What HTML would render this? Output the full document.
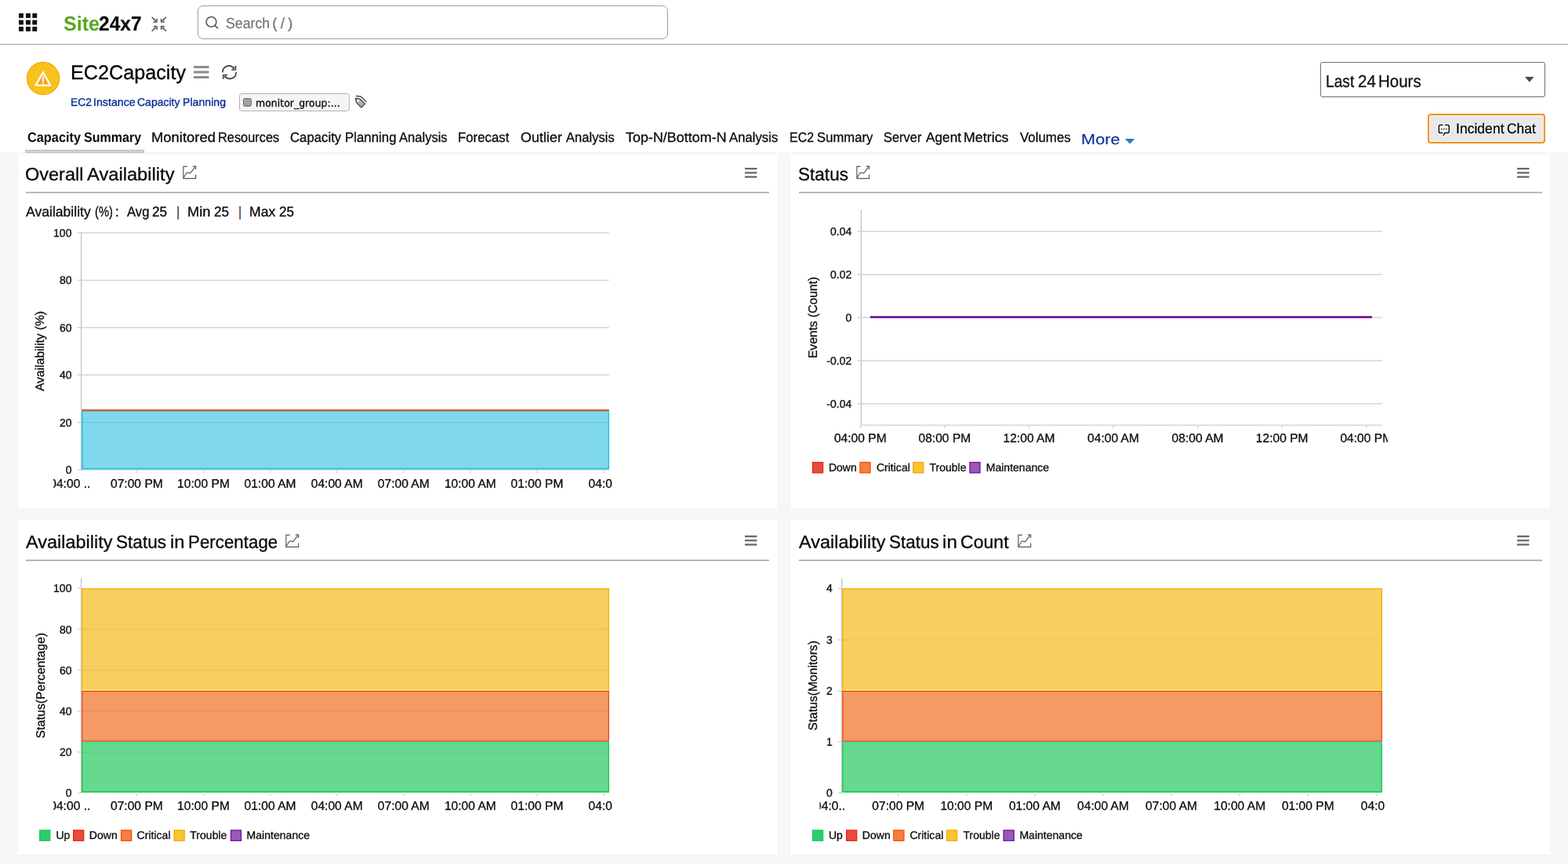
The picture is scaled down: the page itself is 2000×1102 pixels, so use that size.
<!DOCTYPE html><html lang="en"><head><meta charset="utf-8"><title>EC2Capacity - Capacity Summary - Site24x7</title>
<meta name="viewport" content="width=2000"><style>
*{box-sizing:border-box;margin:0;padding:0}
html,body{width:2000px;height:1102px;overflow:hidden}
body{position:relative;background:#f7f7f7;font-family:"Liberation Sans",sans-serif;color:#000}
.t{position:absolute;white-space:nowrap;transform-origin:0 0;display:block;text-decoration:none;font-weight:400;-webkit-text-stroke:0.3px currentColor;text-rendering:geometricPrecision}
.g{font:inherit;font-weight:400;text-decoration:none;border:0;background:none;color:inherit}
.o{position:absolute;width:0;height:0}
.ic,.chart{position:absolute;overflow:visible}
.chart{will-change:transform}
.chart text{font-family:"Liberation Sans",sans-serif;fill:#0a0a0a;stroke:#0a0a0a;stroke-width:0.3px;text-rendering:geometricPrecision}
.topbar{position:absolute;left:0;top:0;width:2000px;height:194px;background:#fff}
.topline{position:absolute;left:0;top:56px;width:2000px;height:1px;background:#9c9c9c}
.searchbox{position:absolute;left:252px;top:7px;width:600px;height:43px;border:1.5px solid #9d9d9d;border-radius:7px;background:#fff}
.tagbox{position:absolute;left:304.5px;top:119px;width:141px;height:23px;border:1.3px solid #b4b4b4;border-radius:3.5px;background:#f5f5f5}
.tagsq{position:absolute;left:310px;top:125px;width:11px;height:11px;border:1.3px solid #6a6a6a;border-radius:2.5px;background:#a0a0a0}
.select{position:absolute;left:1684px;top:78.5px;width:287px;height:45.5px;border:1.5px solid #6f6f6f;border-radius:3px;background:#fff}
.chatbtn{position:absolute;left:1821px;top:144.5px;width:150px;height:38.5px;border:2px solid #ff8f00;border-radius:4px;background:#e8e8e8;box-shadow:inset 0 0 0 1.2px #e0fbf8}
.tabline{position:absolute;left:31.5px;top:190.8px;width:152.6px;height:4px;background:#d2d2d2;border:1px solid #bcbcbc}
.panel{position:absolute;background:#fff;box-shadow:0 0 2px rgba(0,0,0,.06)}
.prule{position:absolute;height:1px;background:#a2a2a2}
</style></head><body>
<div class="topbar">
<header>
<svg class="ic" style="left:20px;top:13px" width="32" height="32" viewBox="0 0 32 32"><rect x="4.0" y="4.0" width="5.9" height="5.9" fill="#0d1117"/><rect x="13.0" y="4.0" width="5.9" height="5.9" fill="#0d1117"/><rect x="21.3" y="4.0" width="5.9" height="5.9" fill="#0d1117"/><rect x="4.0" y="12.6" width="5.9" height="5.9" fill="#0d1117"/><rect x="13.0" y="12.6" width="5.9" height="5.9" fill="#0d1117"/><rect x="21.3" y="12.6" width="5.9" height="5.9" fill="#0d1117"/><rect x="4.0" y="21.1" width="5.9" height="5.9" fill="#0d1117"/><rect x="13.0" y="21.1" width="5.9" height="5.9" fill="#0d1117"/><rect x="21.3" y="21.1" width="5.9" height="5.9" fill="#0d1117"/></svg>
<div class="logo"><span class="g"><span class="t" style="left:80.70px;top:17.00px;font-size:26.00px;line-height:26.00px;color:#55a81f;transform:scaleX(0.9658);font-weight:700;-webkit-text-stroke:0;">Site</span></span><span class="t" style="left:125.83px;top:17.00px;font-size:26.00px;line-height:26.00px;color:#0c0c0c;transform:scaleX(0.9443);font-weight:700;-webkit-text-stroke:0.2px #0c0c0c;">24x7</span></div>
<svg class="ic" style="left:190px;top:18px" width="26" height="26" viewBox="0 0 26 26"><path d="M4.10 4.30L8.80 8.80" stroke="#454545" stroke-width="1.45" stroke-linecap="round" fill="none"/><path d="M5.90 10.30H10.30V5.90Z" fill="#9a9ea0" stroke="#454545" stroke-width="0.9" stroke-linejoin="round"/><path d="M4.10 21.30L8.80 16.80" stroke="#454545" stroke-width="1.45" stroke-linecap="round" fill="none"/><path d="M5.90 15.30H10.30V19.70Z" fill="#9a9ea0" stroke="#454545" stroke-width="0.9" stroke-linejoin="round"/><path d="M21.50 4.30L16.80 8.80" stroke="#454545" stroke-width="1.45" stroke-linecap="round" fill="none"/><path d="M19.70 10.30H15.30V5.90Z" fill="#9a9ea0" stroke="#454545" stroke-width="0.9" stroke-linejoin="round"/><path d="M21.50 21.30L16.80 16.80" stroke="#454545" stroke-width="1.45" stroke-linecap="round" fill="none"/><path d="M19.70 15.30H15.30V19.70Z" fill="#9a9ea0" stroke="#454545" stroke-width="0.9" stroke-linejoin="round"/></svg>
<div class="searchbox"></div><svg class="ic" style="left:261px;top:20px" width="19" height="18" viewBox="0 0 19 18"><circle cx="8.5" cy="7.9" r="6.4" fill="none" stroke="#5a5a5a" stroke-width="1.6"/><path d="M13.2 12.6L16.6 15.8" stroke="#5a5a5a" stroke-width="1.7" stroke-linecap="round"/></svg><label class="g"><span class="t" style="left:287.72px;top:20.98px;font-size:19.03px;line-height:19.03px;color:#707070;transform:scaleX(0.9327);-webkit-text-stroke:0.15px #707070;">Search</span> <span class="t" style="left:347.23px;top:20.98px;font-size:19.03px;line-height:19.03px;color:#707070;transform:scaleX(1.0000);-webkit-text-stroke:0.15px #707070;">(</span> <span class="t" style="left:357.76px;top:20.98px;font-size:19.03px;line-height:19.03px;color:#707070;transform:scaleX(1.0000);-webkit-text-stroke:0.15px #707070;">/</span> <span class="t" style="left:367.04px;top:20.98px;font-size:19.03px;line-height:19.03px;color:#707070;transform:scaleX(1.0000);-webkit-text-stroke:0.15px #707070;">)</span></label>
<div class="topline"></div>
</header>
<div class="monitor-head">
<svg class="ic" style="left:33.3px;top:78px" width="44" height="44" viewBox="0 0 44 44"><circle cx="22" cy="22" r="20.6" fill="#f7c21b" stroke="#f5a20c" stroke-width="1.2"/><path d="M21.9 14.1L31.0 30.9H12.8Z" fill="#f6a40e" stroke="#fff" stroke-width="2.4" stroke-linejoin="round"/><path d="M21.9 19.8V26.2" stroke="#fff" stroke-width="1.8" stroke-linecap="round"/><circle cx="21.9" cy="28.7" r="1.1" fill="#fff"/></svg>
<h1 class="g"><span class="t" style="left:89.82px;top:81.27px;font-size:25.46px;line-height:25.46px;color:#000;transform:scaleX(0.9900);">EC2Capacity</span></h1>
<svg class="ic" style="left:246.5px;top:84.1px" width="19.6" height="16.4" viewBox="0 0 19.6 16.4"><rect x="0" y="0.00" width="19.60" height="2.90" rx="0.6" fill="#8b8b8b"/><rect x="0" y="6.50" width="19.60" height="2.90" rx="0.6" fill="#8b8b8b"/><rect x="0" y="13.00" width="19.60" height="2.90" rx="0.6" fill="#8b8b8b"/></svg>
<svg class="ic" style="left:281px;top:81px" width="24" height="23" viewBox="0 0 24 23"><g fill="none" stroke="#3f3f3f" stroke-width="1.7" stroke-linecap="round"><path d="M3.0 10.6A8 8 0 0 1 17.3 6.1"/><path d="M20.2 11.6A8 8 0 0 1 5.9 16.3"/></g><path d="M19.9 2.9V8.3H14.5Z" fill="#8d9194" stroke="#3f3f3f" stroke-width="1" stroke-linejoin="round"/><path d="M3.4 19.7V14.2H8.9Z" fill="#8d9194" stroke="#3f3f3f" stroke-width="1" stroke-linejoin="round"/></svg>
<a class="g"><span class="t" style="left:89.61px;top:123.00px;font-size:14.00px;line-height:14.00px;color:#002a93;transform:scaleX(0.9913);-webkit-text-stroke:0.3px #002a93;">EC2</span> <span class="t" style="left:118.82px;top:123.00px;font-size:14.00px;line-height:14.00px;color:#002a93;transform:scaleX(1.0153);-webkit-text-stroke:0.3px #002a93;">Instance</span> <span class="t" style="left:175.07px;top:123.00px;font-size:14.00px;line-height:14.00px;color:#002a93;transform:scaleX(0.9990);-webkit-text-stroke:0.3px #002a93;">Capacity</span> <span class="t" style="left:232.94px;top:123.00px;font-size:14.00px;line-height:14.00px;color:#002a93;transform:scaleX(1.0097);-webkit-text-stroke:0.3px #002a93;">Planning</span></a>
<div class="tagbox"></div><div class="tagsq"></div><span class="g"><span class="t" style="left:325.65px;top:125.90px;font-size:13.20px;line-height:13.20px;color:#0a0a0a;transform:scaleX(0.9483);font-family:'DejaVu Sans', 'Liberation Sans', sans-serif;">monitor_group:...</span></span>
<svg class="ic" style="left:452px;top:121px" width="18" height="18" viewBox="0 0 18 18"><path d="M1.4 4.4L7.2 5.2L13.6 11.4L8.9 16.0L2.6 9.9Z" fill="#aeb2b3" stroke="#3a3a3a" stroke-width="1.2" stroke-linejoin="round"/><circle cx="4.7" cy="7.2" r="1.5" fill="#fff"/><path d="M2.6 1.5L8.4 2.2L15.3 8.9" fill="none" stroke="#3a3a3a" stroke-width="1.3" stroke-linecap="round" stroke-linejoin="round"/></svg>
<div class="select"></div><span class="g"><span class="t" style="left:1691.19px;top:92.64px;font-size:21.71px;line-height:21.71px;color:#111;transform:scaleX(0.8839);">Last</span> <span class="t" style="left:1731.55px;top:92.64px;font-size:21.71px;line-height:21.71px;color:#111;transform:scaleX(0.9496);">24</span> <span class="t" style="left:1758.47px;top:92.64px;font-size:21.71px;line-height:21.71px;color:#111;transform:scaleX(0.9443);">Hours</span></span><svg class="ic" style="left:1945px;top:98.2px" width="11.6" height="6.8" viewBox="0 0 11.6 6.8"><path d="M0 0H11.6 L5.8 6.8Z" fill="#4a4a4a"/></svg>
<div class="chatbtn"></div><svg class="ic" style="left:1834px;top:158px" width="17" height="17" viewBox="0 0 17 17"><defs><filter id="halo" x="-30%" y="-30%" width="160%" height="160%"><feMorphology in="SourceAlpha" operator="dilate" radius="1.2" result="d"/><feGaussianBlur in="d" stdDeviation="0.6" result="b"/><feFlood flood-color="#fff"/><feComposite in2="b" operator="in" result="h"/><feMerge><feMergeNode in="h"/><feMergeNode in="SourceGraphic"/></feMerge></filter></defs><g filter="url(#halo)"><path d="M6.0 1.4H2.9Q1.3 1.4 1.3 3.0V9.9Q1.3 11.5 2.9 11.5H5.6M9.4 1.4H12.6Q14.2 1.4 14.2 3.0V9.9Q14.2 11.5 12.6 11.5H9.4Q8.3 11.6 7.9 13.0L7.3 14.4" fill="none" stroke="#000" stroke-width="1.8" stroke-linecap="round" stroke-linejoin="round"/><rect x="4.0" y="6.0" width="1.9" height="1.4" fill="#000"/><rect x="7.0" y="6.0" width="1.9" height="1.4" fill="#000"/><rect x="10.0" y="6.0" width="1.9" height="1.4" fill="#000"/></g></svg><button class="g"><span class="t" style="left:1857.14px;top:154.97px;font-size:18.05px;line-height:18.05px;color:#000;transform:scaleX(0.9747);text-shadow:0 0 2px #fff,0 0 2px #fff,0 0 3px #fff;">Incident</span> <span class="t" style="left:1921.91px;top:154.97px;font-size:18.05px;line-height:18.05px;color:#000;transform:scaleX(0.9640);text-shadow:0 0 2px #fff,0 0 2px #fff,0 0 3px #fff;">Chat</span></button>
</div>
<nav>
<a class="g"><span class="t" style="left:34.98px;top:167.26px;font-size:17.48px;line-height:17.48px;color:#0b0b0b;transform:scaleX(0.9343);font-weight:700;-webkit-text-stroke:0;">Capacity</span> <span class="t" style="left:107.07px;top:167.26px;font-size:17.48px;line-height:17.48px;color:#0b0b0b;transform:scaleX(0.9184);font-weight:700;-webkit-text-stroke:0;">Summary</span></a>
<a class="g"><span class="t" style="left:193.42px;top:167.26px;font-size:17.48px;line-height:17.48px;color:#0b0b0b;transform:scaleX(1.0540);">Monitored</span> <span class="t" style="left:277.91px;top:167.26px;font-size:17.48px;line-height:17.48px;color:#0b0b0b;transform:scaleX(0.9359);">Resources</span></a>
<a class="g"><span class="t" style="left:370.21px;top:167.26px;font-size:17.48px;line-height:17.48px;color:#0b0b0b;transform:scaleX(0.9602);">Capacity</span> <span class="t" style="left:440.13px;top:167.26px;font-size:17.48px;line-height:17.48px;color:#0b0b0b;transform:scaleX(0.9650);">Planning</span> <span class="t" style="left:508.96px;top:167.26px;font-size:17.48px;line-height:17.48px;color:#0b0b0b;transform:scaleX(0.9478);">Analysis</span></a>
<a class="g"><span class="t" style="left:583.79px;top:167.26px;font-size:17.48px;line-height:17.48px;color:#0b0b0b;transform:scaleX(0.9620);">Forecast</span></a>
<a class="g"><span class="t" style="left:663.57px;top:167.26px;font-size:17.48px;line-height:17.48px;color:#0b0b0b;transform:scaleX(1.0310);">Outlier</span> <span class="t" style="left:722.13px;top:167.26px;font-size:17.48px;line-height:17.48px;color:#0b0b0b;transform:scaleX(0.9493);">Analysis</span></a>
<a class="g"><span class="t" style="left:798.12px;top:167.26px;font-size:17.48px;line-height:17.48px;color:#0b0b0b;transform:scaleX(1.0274);">Top-N/Bottom-N</span> <span class="t" style="left:929.82px;top:167.26px;font-size:17.48px;line-height:17.48px;color:#0b0b0b;transform:scaleX(0.9577);">Analysis</span></a>
<a class="g"><span class="t" style="left:1006.77px;top:167.26px;font-size:17.48px;line-height:17.48px;color:#0b0b0b;transform:scaleX(0.9146);">EC2</span> <span class="t" style="left:1041.97px;top:167.26px;font-size:17.48px;line-height:17.48px;color:#0b0b0b;transform:scaleX(0.9552);">Summary</span></a>
<a class="g"><span class="t" style="left:1127.23px;top:167.26px;font-size:17.48px;line-height:17.48px;color:#0b0b0b;transform:scaleX(0.9409);">Server</span> <span class="t" style="left:1180.84px;top:167.26px;font-size:17.48px;line-height:17.48px;color:#0b0b0b;transform:scaleX(0.9871);">Agent</span> <span class="t" style="left:1228.65px;top:167.26px;font-size:17.48px;line-height:17.48px;color:#0b0b0b;transform:scaleX(1.0212);">Metrics</span></a>
<a class="g"><span class="t" style="left:1300.52px;top:167.26px;font-size:17.48px;line-height:17.48px;color:#0b0b0b;transform:scaleX(0.9666);">Volumes</span></a>
<a class="g"><span class="t" style="left:1378.62px;top:169.12px;font-size:18.75px;line-height:18.75px;color:#002f98;transform:scaleX(1.1623);-webkit-text-stroke:0.1px #002f98;">More</span></a><svg class="ic" style="left:1434.8px;top:177px" width="12.4" height="6.4" viewBox="0 0 12.4 6.4"><path d="M0 0H12.4 L6.2 6.4Z" fill="#2f72cf"/></svg>
<div class="tabline"></div>
</nav>
</div>
<main>
<section class="panel" style="left:23px;top:197px;width:969px;height:452px"><div class="o" style="left:-23px;top:-197px">
<h2 class="g"><span class="t" style="left:32.43px;top:210.51px;font-size:22.98px;line-height:22.98px;color:#0a0a0a;transform:scaleX(1.0237);">Overall</span> <span class="t" style="left:110.77px;top:210.51px;font-size:22.98px;line-height:22.98px;color:#0a0a0a;transform:scaleX(1.0317);">Availability</span></h2><svg class="ic" style="left:233px;top:211.4px" width="18" height="18" viewBox="0 0 18 18"><g fill="none" stroke="#55595a" stroke-width="1.2" stroke-linecap="round" stroke-linejoin="round"><path d="M5.4 1.3H0.9V16.7H16.7V12.2"/><path d="M1.3 15.5L5.4 9.0L9.7 9.8L16.0 1.9"/><path d="M13.2 1.0L16.6 1.2L16.7 4.6" fill="#8c9092"/></g></svg><svg class="ic" style="left:949.6px;top:214px" width="15.6" height="13.2" viewBox="0 0 15.6 13.2"><rect x="0" y="0.00" width="15.60" height="2.20" rx="0.6" fill="#666"/><rect x="0" y="5.25" width="15.60" height="2.20" rx="0.6" fill="#666"/><rect x="0" y="10.50" width="15.60" height="2.20" rx="0.6" fill="#666"/></svg>
<div class="prule" style="left:33px;top:245px;width:948px;box-shadow:0 1px 0 #e4e4e4,0 -1px 0 #e6e6e6"></div>
<p class="g"><span class="t" style="left:32.82px;top:261.01px;font-size:17.98px;line-height:17.98px;color:#0b0b0b;transform:scaleX(0.9782);">Availability</span> <span class="t" style="left:120.84px;top:261.01px;font-size:17.98px;line-height:17.98px;color:#0b0b0b;transform:scaleX(0.8185);">(%)</span> <span class="t" style="left:146.84px;top:261.01px;font-size:17.98px;line-height:17.98px;color:#0b0b0b;transform:scaleX(1.0000);">:</span> <span class="t" style="left:162.30px;top:261.01px;font-size:17.98px;line-height:17.98px;color:#0b0b0b;transform:scaleX(0.9277);">Avg</span> <span class="t" style="left:194.14px;top:261.01px;font-size:17.98px;line-height:17.98px;color:#0b0b0b;transform:scaleX(0.9563);">25</span> <span class="t" style="left:224.70px;top:261.01px;font-size:17.98px;line-height:17.98px;color:#0b0b0b;transform:scaleX(1.0000);-webkit-text-stroke:0;color:#3a3a3a;">|</span> <span class="t" style="left:239.23px;top:261.01px;font-size:17.98px;line-height:17.98px;color:#0b0b0b;transform:scaleX(1.0173);">Min</span> <span class="t" style="left:272.65px;top:261.01px;font-size:17.98px;line-height:17.98px;color:#0b0b0b;transform:scaleX(0.9563);">25</span> <span class="t" style="left:303.70px;top:261.01px;font-size:17.98px;line-height:17.98px;color:#0b0b0b;transform:scaleX(1.0000);-webkit-text-stroke:0;color:#3a3a3a;">|</span> <span class="t" style="left:318.45px;top:261.01px;font-size:17.98px;line-height:17.98px;color:#0b0b0b;transform:scaleX(0.9775);">Max</span> <span class="t" style="left:355.63px;top:261.01px;font-size:17.98px;line-height:17.98px;color:#0b0b0b;transform:scaleX(0.9563);">25</span></p>
<svg class="chart" style="left:23px;top:250px" width="969" height="399" viewBox="23 250 969 399"><defs><clipPath id="c1"><rect x="68" y="600" width="712.8" height="40"/></clipPath></defs><line x1="98.5" x2="776.8" y1="296.9" y2="296.9" stroke="#d6d6d6" stroke-width="1.5" opacity="1"/><line x1="98.5" x2="776.8" y1="357.4" y2="357.4" stroke="#d6d6d6" stroke-width="1.5" opacity="1"/><line x1="98.5" x2="776.8" y1="417.8" y2="417.8" stroke="#d6d6d6" stroke-width="1.5" opacity="1"/><line x1="98.5" x2="776.8" y1="478.3" y2="478.3" stroke="#d6d6d6" stroke-width="1.5" opacity="1"/><line x1="98.5" x2="776.8" y1="538.7" y2="538.7" stroke="#d6d6d6" stroke-width="1.5" opacity="1"/><line x1="98.5" x2="776.8" y1="599.2" y2="599.2" stroke="#d6d6d6" stroke-width="1.5" opacity="1"/><line x1="103.6" x2="103.6" y1="296.2" y2="599.9" stroke="#c9c9c9" stroke-width="1.5"/><rect x="104.30" y="523.40" width="672.60" height="75.20" fill="#7fd8ec"/><line x1="104.3" x2="776.8" y1="538.8" y2="538.8" stroke="#6fcbe0" stroke-width="1.5" opacity="1"/><path d="M104.9 524.5V597.7H776.3V524.5" fill="none" stroke="#1fc0e8" stroke-width="1.5"/><line x1="104.3" x2="776.9" y1="525.0" y2="525.0" stroke="#3fe6fb" stroke-width="1.6" opacity="1"/><line x1="104.3" x2="776.9" y1="523.3" y2="523.3" stroke="#e8410d" stroke-width="2" opacity="1"/><line x1="174.4" x2="174.4" y1="600.4" y2="603.2" stroke="#cfcfcf" stroke-width="1.4"/><line x1="259.5" x2="259.5" y1="600.4" y2="603.2" stroke="#cfcfcf" stroke-width="1.4"/><line x1="344.6" x2="344.6" y1="600.4" y2="603.2" stroke="#cfcfcf" stroke-width="1.4"/><line x1="429.7" x2="429.7" y1="600.4" y2="603.2" stroke="#cfcfcf" stroke-width="1.4"/><line x1="514.8" x2="514.8" y1="600.4" y2="603.2" stroke="#cfcfcf" stroke-width="1.4"/><line x1="599.9" x2="599.9" y1="600.4" y2="603.2" stroke="#cfcfcf" stroke-width="1.4"/><line x1="685.0" x2="685.0" y1="600.4" y2="603.2" stroke="#cfcfcf" stroke-width="1.4"/><line x1="770.1" x2="770.1" y1="600.4" y2="603.2" stroke="#cfcfcf" stroke-width="1.4"/><g class="yl" font-size="14.06" text-anchor="end"><text x="91.5" y="301.8">100</text><text x="91.5" y="362.3">80</text><text x="91.5" y="422.7">60</text><text x="91.5" y="483.2">40</text><text x="91.5" y="543.6">20</text><text x="91.5" y="604.1">0</text></g><g class="xl" font-size="15.625" text-anchor="middle" clip-path="url(#c1)"><text x="89.3" y="621.6">04:00 ..</text><text x="174.4" y="621.6">07:00 PM</text><text x="259.5" y="621.6">10:00 PM</text><text x="344.6" y="621.6">01:00 AM</text><text x="429.7" y="621.6">04:00 AM</text><text x="514.8" y="621.6">07:00 AM</text><text x="599.9" y="621.6">10:00 AM</text><text x="685.0" y="621.6">01:00 PM</text><text x="770.1" y="621.6">04:0..</text></g><text class="yt" font-size="15.625" text-anchor="middle" transform="translate(56.2 447.8) rotate(-90)">Availability (%)</text></svg>
</div></section>
<section class="panel" style="left:1008px;top:197px;width:969px;height:452px"><div class="o" style="left:-1008px;top:-197px">
<h2 class="g"><span class="t" style="left:1017.78px;top:210.51px;font-size:22.98px;line-height:22.98px;color:#0a0a0a;transform:scaleX(0.9821);">Status</span></h2><svg class="ic" style="left:1092.3px;top:211.4px" width="18" height="18" viewBox="0 0 18 18"><g fill="none" stroke="#55595a" stroke-width="1.2" stroke-linecap="round" stroke-linejoin="round"><path d="M5.4 1.3H0.9V16.7H16.7V12.2"/><path d="M1.3 15.5L5.4 9.0L9.7 9.8L16.0 1.9"/><path d="M13.2 1.0L16.6 1.2L16.7 4.6" fill="#8c9092"/></g></svg><svg class="ic" style="left:1935.2px;top:214px" width="15.6" height="13.2" viewBox="0 0 15.6 13.2"><rect x="0" y="0.00" width="15.60" height="2.20" rx="0.6" fill="#666"/><rect x="0" y="5.25" width="15.60" height="2.20" rx="0.6" fill="#666"/><rect x="0" y="10.50" width="15.60" height="2.20" rx="0.6" fill="#666"/></svg>
<div class="prule" style="left:1019px;top:245px;width:948px;box-shadow:0 1px 0 #e4e4e4,0 -1px 0 #e6e6e6"></div>
<svg class="chart" style="left:1008px;top:250px" width="969" height="399" viewBox="1008 250 969 399"><defs><clipPath id="c2"><rect x="1040" y="545" width="730.2" height="40"/></clipPath></defs><line x1="1093.5" x2="1763.1" y1="295.3" y2="295.3" stroke="#d6d6d6" stroke-width="1.5" opacity="1"/><line x1="1093.5" x2="1763.1" y1="350.2" y2="350.2" stroke="#d6d6d6" stroke-width="1.5" opacity="1"/><line x1="1093.5" x2="1763.1" y1="405.1" y2="405.1" stroke="#d6d6d6" stroke-width="1.5" opacity="1"/><line x1="1093.5" x2="1763.1" y1="460.0" y2="460.0" stroke="#d6d6d6" stroke-width="1.5" opacity="1"/><line x1="1093.5" x2="1763.1" y1="514.9" y2="514.9" stroke="#d6d6d6" stroke-width="1.5" opacity="1"/><line x1="1098.5" x2="1098.5" y1="267.6" y2="543" stroke="#c9c9c9" stroke-width="1.5"/><line x1="1098.5" x2="1763.1" y1="542.3" y2="542.3" stroke="#dadada" stroke-width="1.7" opacity="1"/><line x1="1097.3" x2="1097.3" y1="543.0" y2="546.3" stroke="#cfcfcf" stroke-width="1.4"/><line x1="1204.9" x2="1204.9" y1="543.0" y2="546.3" stroke="#cfcfcf" stroke-width="1.4"/><line x1="1312.5" x2="1312.5" y1="543.0" y2="546.3" stroke="#cfcfcf" stroke-width="1.4"/><line x1="1420.0" x2="1420.0" y1="543.0" y2="546.3" stroke="#cfcfcf" stroke-width="1.4"/><line x1="1527.6" x2="1527.6" y1="543.0" y2="546.3" stroke="#cfcfcf" stroke-width="1.4"/><line x1="1635.2" x2="1635.2" y1="543.0" y2="546.3" stroke="#cfcfcf" stroke-width="1.4"/><line x1="1742.8" x2="1742.8" y1="543.0" y2="546.3" stroke="#cfcfcf" stroke-width="1.4"/><line x1="1110.0" x2="1750.1" y1="403.7" y2="403.7" stroke="#d42a2a" stroke-width="1.4" opacity="1"/><line x1="1110.0" x2="1750.1" y1="404.7" y2="404.7" stroke="#5a12c8" stroke-width="1.9" opacity="1"/><g class="yl" font-size="14.06" text-anchor="end"><text x="1086.3" y="300.2">0.04</text><text x="1086.3" y="355.1">0.02</text><text x="1086.3" y="410.0">0</text><text x="1086.3" y="464.9">-0.02</text><text x="1086.3" y="519.8">-0.04</text></g><g class="xl" font-size="15.625" text-anchor="middle" clip-path="url(#c2)"><text x="1097.3" y="564.0">04:00 PM</text><text x="1204.9" y="564.0">08:00 PM</text><text x="1312.5" y="564.0">12:00 AM</text><text x="1420.0" y="564.0">04:00 AM</text><text x="1527.6" y="564.0">08:00 AM</text><text x="1635.2" y="564.0">12:00 PM</text><text x="1742.8" y="564.0">04:00 PM</text></g><text class="yt" font-size="15.625" text-anchor="middle" transform="translate(1042.4 405.0) rotate(-90)">Events (Count)</text><g class="lg" font-size="14.06"><rect x="1036.6" y="589.8" width="13" height="13.2" fill="#e74c3c" stroke="#ea2a1c" stroke-width="1.4"/><text x="1056.9" y="600.8">Down</text><rect x="1097.0" y="589.8" width="13" height="13.2" fill="#f5813a" stroke="#f4500e" stroke-width="1.4"/><text x="1117.9" y="600.8">Critical</text><rect x="1164.8" y="589.8" width="13" height="13.2" fill="#f7c62a" stroke="#f6a912" stroke-width="1.4"/><text x="1185.4" y="600.8">Trouble</text><rect x="1237.0" y="589.8" width="13" height="13.2" fill="#9b59b6" stroke="#6c1aa6" stroke-width="1.4"/><text x="1257.7" y="600.8">Maintenance</text></g></svg>
</div></section>
<section class="panel" style="left:23px;top:663px;width:969px;height:427px"><div class="o" style="left:-23px;top:-663px">
<h2 class="g"><span class="t" style="left:33.04px;top:679.51px;font-size:22.98px;line-height:22.98px;color:#0a0a0a;transform:scaleX(1.0218);">Availability</span> <span class="t" style="left:147.98px;top:679.51px;font-size:22.98px;line-height:22.98px;color:#0a0a0a;transform:scaleX(0.9837);">Status</span> <span class="t" style="left:217.04px;top:679.51px;font-size:22.98px;line-height:22.98px;color:#0a0a0a;transform:scaleX(1.0376);">in</span> <span class="t" style="left:240.43px;top:679.51px;font-size:22.98px;line-height:22.98px;color:#0a0a0a;transform:scaleX(0.9725);">Percentage</span></h2><svg class="ic" style="left:364px;top:681px" width="18" height="18" viewBox="0 0 18 18"><g fill="none" stroke="#55595a" stroke-width="1.2" stroke-linecap="round" stroke-linejoin="round"><path d="M5.4 1.3H0.9V16.7H16.7V12.2"/><path d="M1.3 15.5L5.4 9.0L9.7 9.8L16.0 1.9"/><path d="M13.2 1.0L16.6 1.2L16.7 4.6" fill="#8c9092"/></g></svg><svg class="ic" style="left:949.6px;top:683px" width="15.6" height="13.2" viewBox="0 0 15.6 13.2"><rect x="0" y="0.00" width="15.60" height="2.20" rx="0.6" fill="#666"/><rect x="0" y="5.25" width="15.60" height="2.20" rx="0.6" fill="#666"/><rect x="0" y="10.50" width="15.60" height="2.20" rx="0.6" fill="#666"/></svg>
<div class="prule" style="left:33px;top:714px;width:948px;box-shadow:0 1px 0 #d2d2d2,0 -1px 0 #f2f2f2"></div>
<svg class="chart" style="left:23px;top:716px" width="969" height="374" viewBox="23 716 969 374"><defs><clipPath id="c3"><rect x="68.0" y="1013" width="712.8" height="40"/></clipPath></defs><line x1="98.6" x2="103.6" y1="750.4" y2="750.4" stroke="#d6d6d6" stroke-width="1.5" opacity="1"/><line x1="98.6" x2="103.6" y1="802.6" y2="802.6" stroke="#d6d6d6" stroke-width="1.5" opacity="1"/><line x1="98.6" x2="103.6" y1="854.8" y2="854.8" stroke="#d6d6d6" stroke-width="1.5" opacity="1"/><line x1="98.6" x2="103.6" y1="907.1" y2="907.1" stroke="#d6d6d6" stroke-width="1.5" opacity="1"/><line x1="98.6" x2="103.6" y1="959.3" y2="959.3" stroke="#d6d6d6" stroke-width="1.5" opacity="1"/><line x1="98.6" x2="103.6" y1="1011.5" y2="1011.5" stroke="#d6d6d6" stroke-width="1.5" opacity="1"/><line x1="103.6" x2="103.6" y1="737.2" y2="1012" stroke="#c9c9c9" stroke-width="1.5"/><rect x="104.40" y="750.40" width="672.50" height="130.55" fill="#f8cf5f"/><rect x="104.40" y="880.95" width="672.50" height="65.27" fill="#f59a64"/><rect x="104.40" y="946.23" width="672.50" height="64.48" fill="#66d98f"/><line x1="104.4" x2="776.9" y1="802.6" y2="802.6" stroke="#000" stroke-width="1.5" opacity="0.045"/><line x1="104.4" x2="776.9" y1="854.8" y2="854.8" stroke="#000" stroke-width="1.5" opacity="0.045"/><line x1="104.4" x2="776.9" y1="907.1" y2="907.1" stroke="#000" stroke-width="1.5" opacity="0.045"/><line x1="104.4" x2="776.9" y1="959.3" y2="959.3" stroke="#000" stroke-width="1.5" opacity="0.045"/><path d="M104.8 881.0V751.0H776.4V881.0" fill="none" stroke="#f4ae00" stroke-width="1.25"/><line x1="104.4" x2="776.9" y1="880.1" y2="880.1" stroke="#fdf06a" stroke-width="1.4" opacity="1"/><path d="M104.8 946.2V881.6H776.4V946.2" fill="none" stroke="#f4431a" stroke-width="1.25"/><line x1="104.4" x2="776.9" y1="945.3" y2="945.3" stroke="#f5552a" stroke-width="1.4" opacity="1"/><path d="M104.8 946.2V1010.0H776.4V946.2" fill="none" stroke="#14c548" stroke-width="1.3"/><line x1="104.4" x2="776.9" y1="946.9" y2="946.9" stroke="#24e79a" stroke-width="1.5" opacity="1"/><line x1="174.4" x2="174.4" y1="1012.6" y2="1015.4" stroke="#cfcfcf" stroke-width="1.4"/><line x1="259.5" x2="259.5" y1="1012.6" y2="1015.4" stroke="#cfcfcf" stroke-width="1.4"/><line x1="344.6" x2="344.6" y1="1012.6" y2="1015.4" stroke="#cfcfcf" stroke-width="1.4"/><line x1="429.7" x2="429.7" y1="1012.6" y2="1015.4" stroke="#cfcfcf" stroke-width="1.4"/><line x1="514.8" x2="514.8" y1="1012.6" y2="1015.4" stroke="#cfcfcf" stroke-width="1.4"/><line x1="599.9" x2="599.9" y1="1012.6" y2="1015.4" stroke="#cfcfcf" stroke-width="1.4"/><line x1="685.0" x2="685.0" y1="1012.6" y2="1015.4" stroke="#cfcfcf" stroke-width="1.4"/><line x1="770.1" x2="770.1" y1="1012.6" y2="1015.4" stroke="#cfcfcf" stroke-width="1.4"/><g class="yl" font-size="14.06" text-anchor="end"><text x="91.5" y="755.3">100</text><text x="91.5" y="807.5">80</text><text x="91.5" y="859.7">60</text><text x="91.5" y="912.0">40</text><text x="91.5" y="964.2">20</text><text x="91.5" y="1016.4">0</text></g><g class="xl" font-size="15.625" text-anchor="middle" clip-path="url(#c3)"><text x="89.3" y="1033.3">04:00 ..</text><text x="174.4" y="1033.3">07:00 PM</text><text x="259.5" y="1033.3">10:00 PM</text><text x="344.6" y="1033.3">01:00 AM</text><text x="429.7" y="1033.3">04:00 AM</text><text x="514.8" y="1033.3">07:00 AM</text><text x="599.9" y="1033.3">10:00 AM</text><text x="685.0" y="1033.3">01:00 PM</text><text x="770.1" y="1033.3">04:0..</text></g><text class="yt" font-size="15.625" text-anchor="middle" transform="translate(56.5 874.4) rotate(-90)">Status(Percentage)</text><g class="lg" font-size="14.06"><rect x="50.7" y="1059.0" width="13" height="13.2" fill="#2ecc71" stroke="#1fc85a" stroke-width="1.4"/><text x="71.4" y="1070.0">Up</text><rect x="93.7" y="1059.0" width="13" height="13.2" fill="#e74c3c" stroke="#ea2a1c" stroke-width="1.4"/><text x="113.8" y="1070.0">Down</text><rect x="154.6" y="1059.0" width="13" height="13.2" fill="#f5813a" stroke="#f4500e" stroke-width="1.4"/><text x="174.6" y="1070.0">Critical</text><rect x="222.2" y="1059.0" width="13" height="13.2" fill="#f7c62a" stroke="#f6a912" stroke-width="1.4"/><text x="242.3" y="1070.0">Trouble</text><rect x="294.5" y="1059.0" width="13" height="13.2" fill="#9b59b6" stroke="#6c1aa6" stroke-width="1.4"/><text x="314.6" y="1070.0">Maintenance</text></g></svg>
</div></section>
<section class="panel" style="left:1008px;top:663px;width:969px;height:427px"><div class="o" style="left:-1008px;top:-663px">
<h2 class="g"><span class="t" style="left:1018.74px;top:679.51px;font-size:22.98px;line-height:22.98px;color:#0a0a0a;transform:scaleX(1.0226);">Availability</span> <span class="t" style="left:1133.77px;top:679.51px;font-size:22.98px;line-height:22.98px;color:#0a0a0a;transform:scaleX(0.9791);">Status</span> <span class="t" style="left:1202.04px;top:679.51px;font-size:22.98px;line-height:22.98px;color:#0a0a0a;transform:scaleX(1.0574);">in</span> <span class="t" style="left:1224.93px;top:679.51px;font-size:22.98px;line-height:22.98px;color:#0a0a0a;transform:scaleX(1.0052);">Count</span></h2><svg class="ic" style="left:1298px;top:681px" width="18" height="18" viewBox="0 0 18 18"><g fill="none" stroke="#55595a" stroke-width="1.2" stroke-linecap="round" stroke-linejoin="round"><path d="M5.4 1.3H0.9V16.7H16.7V12.2"/><path d="M1.3 15.5L5.4 9.0L9.7 9.8L16.0 1.9"/><path d="M13.2 1.0L16.6 1.2L16.7 4.6" fill="#8c9092"/></g></svg><svg class="ic" style="left:1935.2px;top:683px" width="15.6" height="13.2" viewBox="0 0 15.6 13.2"><rect x="0" y="0.00" width="15.60" height="2.20" rx="0.6" fill="#666"/><rect x="0" y="5.25" width="15.60" height="2.20" rx="0.6" fill="#666"/><rect x="0" y="10.50" width="15.60" height="2.20" rx="0.6" fill="#666"/></svg>
<div class="prule" style="left:1019px;top:714px;width:948px;box-shadow:0 1px 0 #d2d2d2,0 -1px 0 #f2f2f2"></div>
<svg class="chart" style="left:1008px;top:716px" width="969" height="374" viewBox="1008 716 969 374"><defs><clipPath id="c4"><rect x="1045.5" y="1013" width="720.7" height="40"/></clipPath></defs><line x1="1068.7" x2="1073.7" y1="750.4" y2="750.4" stroke="#d6d6d6" stroke-width="1.5" opacity="1"/><line x1="1068.7" x2="1073.7" y1="816.2" y2="816.2" stroke="#d6d6d6" stroke-width="1.5" opacity="1"/><line x1="1068.7" x2="1073.7" y1="881.3" y2="881.3" stroke="#d6d6d6" stroke-width="1.5" opacity="1"/><line x1="1068.7" x2="1073.7" y1="946.4" y2="946.4" stroke="#d6d6d6" stroke-width="1.5" opacity="1"/><line x1="1068.7" x2="1073.7" y1="1011.5" y2="1011.5" stroke="#d6d6d6" stroke-width="1.5" opacity="1"/><line x1="1073.7" x2="1073.7" y1="737.2" y2="1012" stroke="#c9c9c9" stroke-width="1.5"/><rect x="1074.50" y="750.40" width="688.40" height="130.55" fill="#f8cf5f"/><rect x="1074.50" y="880.95" width="688.40" height="65.27" fill="#f59a64"/><rect x="1074.50" y="946.23" width="688.40" height="64.48" fill="#66d98f"/><line x1="1074.5" x2="1762.9" y1="816.2" y2="816.2" stroke="#000" stroke-width="1.5" opacity="0.045"/><line x1="1074.5" x2="1762.9" y1="881.3" y2="881.3" stroke="#000" stroke-width="1.5" opacity="0.045"/><line x1="1074.5" x2="1762.9" y1="946.4" y2="946.4" stroke="#000" stroke-width="1.5" opacity="0.045"/><path d="M1074.9 881.0V751.0H1762.4V881.0" fill="none" stroke="#f4ae00" stroke-width="1.25"/><line x1="1074.5" x2="1762.9" y1="880.1" y2="880.1" stroke="#fdf06a" stroke-width="1.4" opacity="1"/><path d="M1074.9 946.2V881.6H1762.4V946.2" fill="none" stroke="#f4431a" stroke-width="1.25"/><line x1="1074.5" x2="1762.9" y1="945.3" y2="945.3" stroke="#f5552a" stroke-width="1.4" opacity="1"/><path d="M1074.9 946.2V1010.0H1762.4V946.2" fill="none" stroke="#14c548" stroke-width="1.3"/><line x1="1074.5" x2="1762.9" y1="946.9" y2="946.9" stroke="#24e79a" stroke-width="1.5" opacity="1"/><line x1="1145.7" x2="1145.7" y1="1012.6" y2="1015.4" stroke="#cfcfcf" stroke-width="1.4"/><line x1="1232.8" x2="1232.8" y1="1012.6" y2="1015.4" stroke="#cfcfcf" stroke-width="1.4"/><line x1="1319.9" x2="1319.9" y1="1012.6" y2="1015.4" stroke="#cfcfcf" stroke-width="1.4"/><line x1="1407.0" x2="1407.0" y1="1012.6" y2="1015.4" stroke="#cfcfcf" stroke-width="1.4"/><line x1="1494.1" x2="1494.1" y1="1012.6" y2="1015.4" stroke="#cfcfcf" stroke-width="1.4"/><line x1="1581.2" x2="1581.2" y1="1012.6" y2="1015.4" stroke="#cfcfcf" stroke-width="1.4"/><line x1="1668.3" x2="1668.3" y1="1012.6" y2="1015.4" stroke="#cfcfcf" stroke-width="1.4"/><line x1="1755.4" x2="1755.4" y1="1012.6" y2="1015.4" stroke="#cfcfcf" stroke-width="1.4"/><g class="yl" font-size="14.06" text-anchor="end"><text x="1061.9" y="755.3">4</text><text x="1061.9" y="821.1">3</text><text x="1061.9" y="886.2">2</text><text x="1061.9" y="951.3">1</text><text x="1061.9" y="1016.4">0</text></g><g class="xl" font-size="15.625" text-anchor="middle" clip-path="url(#c4)"><text x="1058.6" y="1033.3">04:0..</text><text x="1145.7" y="1033.3">07:00 PM</text><text x="1232.8" y="1033.3">10:00 PM</text><text x="1319.9" y="1033.3">01:00 AM</text><text x="1407.0" y="1033.3">04:00 AM</text><text x="1494.1" y="1033.3">07:00 AM</text><text x="1581.2" y="1033.3">10:00 AM</text><text x="1668.3" y="1033.3">01:00 PM</text><text x="1755.4" y="1033.3">04:0..</text></g><text class="yt" font-size="15.625" text-anchor="middle" transform="translate(1042.4 874.4) rotate(-90)">Status(Monitors)</text><g class="lg" font-size="14.06"><rect x="1036.6" y="1059.0" width="13" height="13.2" fill="#2ecc71" stroke="#1fc85a" stroke-width="1.4"/><text x="1056.9" y="1070.0">Up</text><rect x="1079.7" y="1059.0" width="13" height="13.2" fill="#e74c3c" stroke="#ea2a1c" stroke-width="1.4"/><text x="1099.8" y="1070.0">Down</text><rect x="1139.9" y="1059.0" width="13" height="13.2" fill="#f5813a" stroke="#f4500e" stroke-width="1.4"/><text x="1160.4" y="1070.0">Critical</text><rect x="1207.6" y="1059.0" width="13" height="13.2" fill="#f7c62a" stroke="#f6a912" stroke-width="1.4"/><text x="1228.4" y="1070.0">Trouble</text><rect x="1280.2" y="1059.0" width="13" height="13.2" fill="#9b59b6" stroke="#6c1aa6" stroke-width="1.4"/><text x="1300.4" y="1070.0">Maintenance</text></g></svg>
</div></section>
</main>
</body></html>
